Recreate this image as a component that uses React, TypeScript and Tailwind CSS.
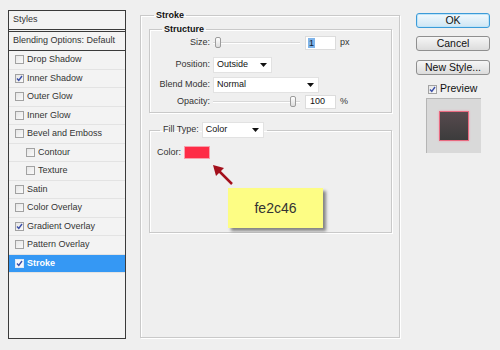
import React from "react";

const font = { fontFamily: '"Liberation Sans", Arial, sans-serif' };

function Check({ checked, white }: { checked?: boolean; white?: boolean }) {
  return (
    <span
      className={`inline-flex w-[9px] h-[9px] shrink-0 items-center justify-center border ${
        white ? "border-[#dfe8f5] bg-[#f6f8fc]" : "border-[#a2a2a2] bg-gradient-to-br from-[#e6e6e6] to-[#fafafa]"
      }`}
    >
      {checked && (
        <svg width="7" height="7" viewBox="0 0 7 7">
          <path d="M1 3.5 L2.8 5.5 L6 1" fill="none" stroke="#3b4fa8" strokeWidth="1.4" />
        </svg>
      )}
    </span>
  );
}

function Row({ label, checked, indent, selected }: { label: string; checked?: boolean; indent?: boolean; selected?: boolean }) {
  return (
    <div
      className={`h-[18.5px] flex items-center gap-[3px] border-b border-[#e3e3e3] whitespace-nowrap ${
        indent ? "pl-[17px]" : "pl-[6px]"
      } ${selected ? "bg-[#3598f4] text-white font-bold" : "text-[#333]"}`}
    >
      <Check checked={checked} white={selected} />
      <span>{label}</span>
    </div>
  );
}

function Select({ value, w }: { value: string; w: string }) {
  return (
    <div className={`${w} h-[16px] bg-white border border-[#e2e2e2] flex items-center justify-between pl-[3px] pr-[4px] text-[#111]`}>
      <span>{value}</span>
      <svg width="7" height="4" viewBox="0 0 7 4">
        <path d="M0 0 L7 0 L3.5 4 Z" fill="#111" />
      </svg>
    </div>
  );
}

function Slider({ pos }: { pos: "start" | "end" }) {
  return (
    <div className={`w-[87px] h-[12px] flex items-center relative`}>
      <div className="w-full h-[2px] bg-[#d8d8d8] border-b border-white" />
      <div
        className={`absolute top-0 ${pos === "start" ? "left-[2px]" : "right-[4px]"} w-[6px] h-[11px] rounded-[2px] border border-[#9c9c9c] bg-gradient-to-b from-white to-[#dcdcdc]`}
      />
    </div>
  );
}

export default function App() {
  return (
    <div className="w-[500px] h-[350px] bg-[#efefef] relative flex text-[9px] overflow-hidden" style={font}>
      {/* Left styles list */}
      <div className="ml-[8px] mt-[10px] w-[118px] h-[329px] border border-[#3a3a3a] bg-[#f3f3f3] flex flex-col">
        <div className="h-[21px] flex items-center pl-[4px] border-b-[3px] border-double border-[#3a3a3a] text-[#333]">Styles</div>
        <div className="h-[19px] flex items-center pl-[4px] border-b border-[#3a3a3a] text-[#333] whitespace-nowrap">Blending Options: Default</div>
        <Row label="Drop Shadow" />
        <Row label="Inner Shadow" checked />
        <Row label="Outer Glow" />
        <Row label="Inner Glow" />
        <Row label="Bevel and Emboss" />
        <Row label="Contour" indent />
        <Row label="Texture" indent />
        <Row label="Satin" />
        <Row label="Color Overlay" />
        <Row label="Gradient Overlay" checked />
        <Row label="Pattern Overlay" />
        <Row label="Stroke" checked selected />
      </div>

      {/* Main stroke group */}
      <fieldset className="ml-[14px] mt-[9px] w-[260px] h-[329px] border border-[#c9c9c9] shadow-[1px_1px_0_#fff,inset_1px_1px_0_#fff] flex flex-col">
        <legend className="ml-[13px] px-[2px] font-bold leading-[12px] text-[#111]">Stroke</legend>

        <fieldset className="ml-[8px] mt-[2px] w-[243px] border border-[#c9c9c9] shadow-[1px_1px_0_#fff,inset_1px_1px_0_#fff] pb-[3px]">
          <legend className="ml-[12px] px-[2px] font-bold leading-[12px] text-[#111]">Structure</legend>
          <div className="mt-[1px] h-[14px] flex items-center">
            <span className="w-[63px] text-right pr-[3px] text-[#333]">Size:</span>
            <Slider pos="start" />
            <div className="ml-[5px] w-[31px] h-[14px] bg-white border border-[#dcdcdc] flex items-center pl-[2px]">
              <span className="bg-[#7fb4ea] text-[#123] px-[1px] leading-[10px]">1</span>
            </div>
            <span className="ml-[4px] text-[#333]">px</span>
          </div>
          <div className="mt-[7px] h-[16px] flex items-center">
            <span className="w-[63px] text-right pr-[3px] text-[#333]">Position:</span>
            <Select value="Outside" w="w-[59px]" />
          </div>
          <div className="mt-[4px] h-[16px] flex items-center">
            <span className="w-[63px] text-right pr-[3px] text-[#333]">Blend Mode:</span>
            <Select value="Normal" w="w-[106px]" />
          </div>
          <div className="mt-[2px] h-[14px] flex items-center">
            <span className="w-[63px] text-right pr-[3px] text-[#333]">Opacity:</span>
            <Slider pos="end" />
            <div className="ml-[5px] w-[31px] h-[14px] bg-white border border-[#dcdcdc] flex items-center pl-[4px] text-[#111]">100</div>
            <span className="ml-[4px] text-[#333]">%</span>
          </div>
        </fieldset>

        <fieldset className="ml-[8px] mt-[9px] w-[243px] h-[111px] border border-[#c9c9c9] shadow-[1px_1px_0_#fff,inset_1px_1px_0_#fff]">
          <legend className="ml-[10px] px-[3px] flex items-center gap-[3px]">
            <span className="text-[#333]">Fill Type:</span>
            <Select value="Color" w="w-[62px]" />
          </legend>
          <div className="mt-[8px] h-[13px] flex items-center pl-[7px]">
            <span className="text-[#333] w-[27px]">Color:</span>
            <div className="w-[26px] h-[13px] bg-[#fe2c46] border border-[#f7a0ac]" />
          </div>
        </fieldset>
      </fieldset>

      {/* Right buttons */}
      <div className="ml-[16px] mt-[13px] w-[74px] flex flex-col items-stretch">
        <button className="h-[15px] rounded-[3px] border border-[#3c9bd8] bg-gradient-to-b from-[#f2f9fd] to-[#cfe6f4] text-[10.5px] leading-none text-[#111] shadow-[inset_0_0_0_1px_#bfe4f8]">OK</button>
        <button className="mt-[8px] h-[15px] rounded-[3px] border border-[#8f8f8f] bg-gradient-to-b from-[#f6f6f6] to-[#dcdcdc] text-[10.5px] leading-none text-[#111]">Cancel</button>
        <button className="mt-[9px] h-[15px] rounded-[3px] border border-[#8f8f8f] bg-gradient-to-b from-[#f6f6f6] to-[#dcdcdc] text-[10.5px] leading-none text-[#111]">New Style...</button>
        <div className="mt-[7px] ml-[12px] h-[14px] flex items-center gap-[3px] text-[10.5px] text-[#111]">
          <Check checked />
          <span>Preview</span>
        </div>
        <div className="mt-[2px] ml-[10px] w-[55px] h-[55px] bg-[#d9d9d9] border-l border-t border-[#b5b5b5] flex items-center justify-center">
          <div className="w-[30px] h-[30px] border-[1.5px] border-[#e86a80] bg-gradient-to-b from-[#574a4e] to-[#3c3c3c] shadow-[0_0_2px_#f0a0b0]" />
        </div>
      </div>

      {/* Annotation arrow */}
      <svg className="absolute left-[205px] top-[158px]" width="35" height="32" viewBox="0 0 35 32">
        <line x1="27" y1="26" x2="12" y2="11" stroke="#a3101c" strokeWidth="2.5" />
        <path d="M8 7 L19 10 L11 18 Z" fill="#a3101c" />
      </svg>

      {/* Yellow note */}
      <div className="absolute left-[228px] top-[188px] w-[95px] h-[40px] bg-[#fdfd84] shadow-[3px_3px_3px_rgba(0,0,0,0.45)] flex items-center justify-center text-[14px] text-[#333]">
        fe2c46
      </div>
    </div>
  );
}
